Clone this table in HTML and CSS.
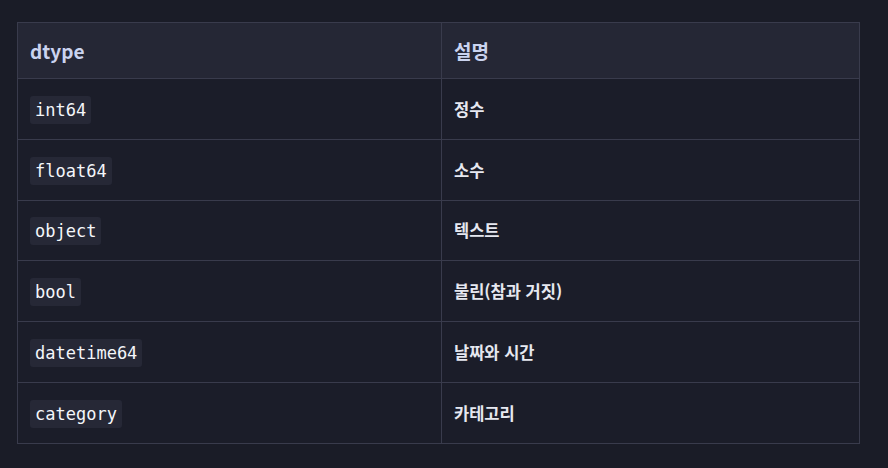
FILE: index.html
```html
<!DOCTYPE html>
<html lang="ko">
<head>
<meta charset="utf-8">
<link rel="stylesheet" href="styles.css">
</head>
<body>
<table class="dtable">
  <thead>
    <tr><th class="col-a">dtype</th><th class="col-b">설명</th></tr>
  </thead>
  <tbody>
    <tr><td><code>int64</code></td><td>정수</td></tr>
    <tr><td><code>float64</code></td><td>소수</td></tr>
    <tr><td><code>object</code></td><td>텍스트</td></tr>
    <tr><td><code>bool</code></td><td>불린(참과 거짓)</td></tr>
    <tr><td><code>datetime64</code></td><td>날짜와 시간</td></tr>
    <tr><td><code>category</code></td><td>카테고리</td></tr>
  </tbody>
</table>
</body>
</html>
```
FILE: styles.css
```css
html, body {
  margin: 0;
  padding: 0;
  background: #1a1c27;
}
body {
  padding: 22px 0 0 17px;
  font-family: "Noto Sans CJK KR", "Noto Sans", sans-serif;
  color: #e4e7f1;
}
.dtable {
  border-collapse: collapse;
  width: 843px;
  table-layout: fixed;
}
.dtable th, .dtable td {
  border: 1px solid #393b4c;
  padding: 0 12px;
  text-align: left;
  vertical-align: middle;
}
.col-a { width: 399px; }
.dtable th {
  background: #252735;
  height: 55px;
  font-size: 19px;
  font-weight: 700;
  color: #cad3ef;
}
.dtable td {
  background: #1b1d29;
  height: 59.8px;
  font-size: 16.5px;
  font-weight: 700;
  color: #e6e8f0;
}
.dtable code {
  font-family: "DejaVu Sans Mono", monospace;
  font-size: 17px;
  font-weight: 400;
  background: #262836;
  color: #f4f6fa;
  padding: 4px 5px;
  border-radius: 3px;
}
```
